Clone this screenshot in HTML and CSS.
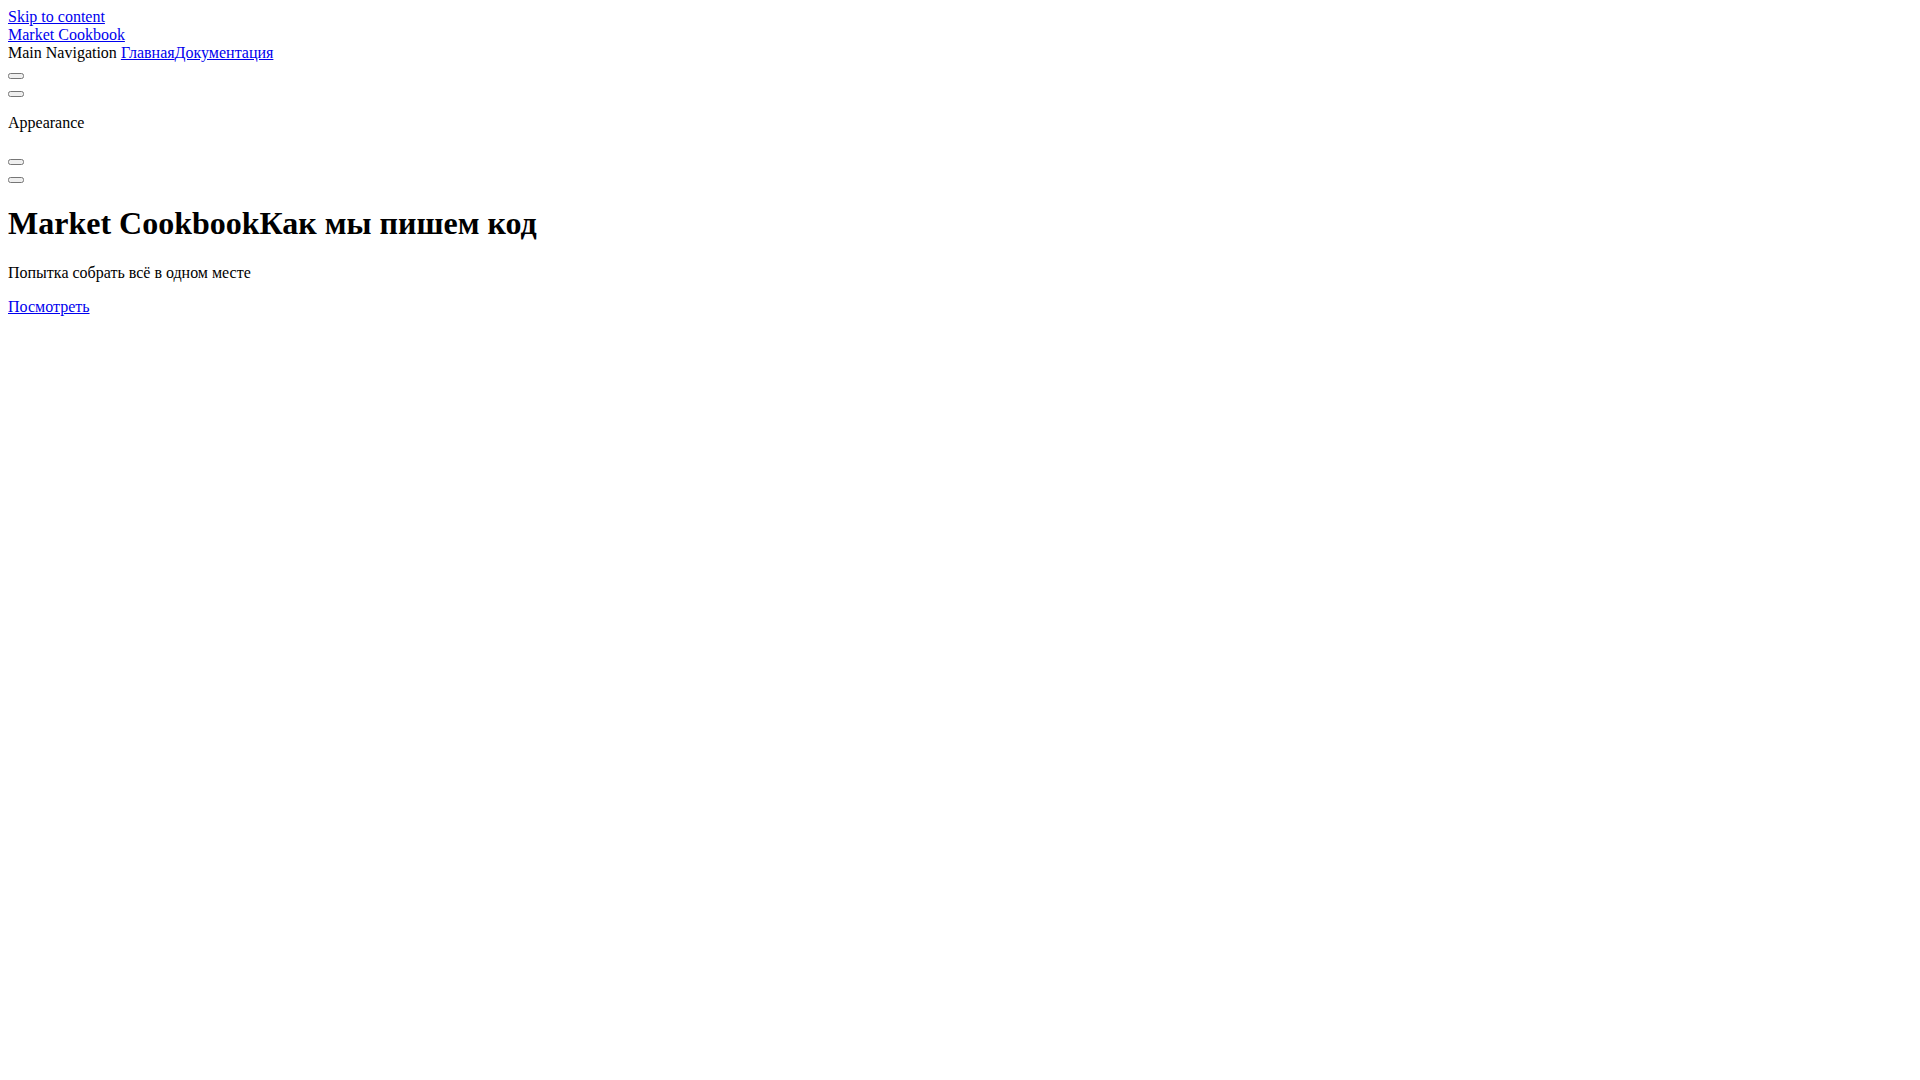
FILE: index.html
```html
<!DOCTYPE html>
<html lang="ru">
<head>
<meta charset="utf-8">
<title>Market Cookbook</title>
<link rel="stylesheet" href="styles.css">
</head>
<body>
<div class="app">
  <div class="skip-row"><a href="#content">Skip to content</a></div>
  <div class="nav">
    <div class="title"><a href="#">Market Cookbook</a></div>
    <div class="nav-links"><span>Main Navigation</span> <a href="#">Главная</a><a href="#">Документация</a></div>
    <div class="btn-row"><button type="button"></button></div>
    <div class="btn-row"><button type="button"></button></div>
    <p class="appearance">Appearance</p>
    <div class="btn-row"><button type="button"></button></div>
    <div class="btn-row"><button type="button"></button></div>
  </div>
  <main id="content" class="hero">
    <h1 class="hero-title"><span>Market Cookbook</span><span>Как мы пишем код</span></h1>
    <p class="hero-tagline">Попытка собрать всё в одном месте</p>
    <div class="hero-actions"><a href="#">Посмотреть</a></div>
  </main>
</div>
</body>
</html>
```

FILE: styles.css
```css
body {
  margin: 8px;
  font-family: "Liberation Serif", "Times New Roman", serif;
  font-size: 16px;
  color: #000;
  background: #fff;
}
.hero-title {
  font-size: 2em;
  font-weight: bold;
  margin: 0.67em 0;
}
.appearance,
.hero-tagline {
  margin: 16px 0;
}
a {
  color: #0000ee;
}
```
